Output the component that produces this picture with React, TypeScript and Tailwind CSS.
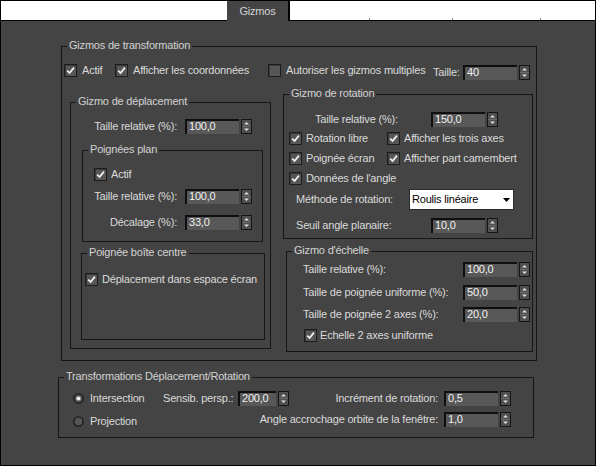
// Gizmos preferences tab (dark 3ds Max style panel)
import React from 'react';

const Check = ({ on = false }: { on?: boolean }) => (
  <span className="flex h-[13px] w-[13px] shrink-0 items-center justify-center border border-[#1c1c1c] bg-[#565656] shadow-[inset_1px_1px_0_#3a3a3a]">
    {on && (
      <svg width="9" height="9" viewBox="0 0 9 9">
        <path d="M1.2 4.6 3.6 7 7.9 1.6" fill="none" stroke="#f2f2f2" strokeWidth="1.7" />
      </svg>
    )}
  </span>
);

const Radio = ({ on = false }: { on?: boolean }) => (
  <svg width="11" height="11" viewBox="0 0 11 11" className="shrink-0">
    <circle cx="5.5" cy="5.5" r="4.6" fill="#555" stroke="#1a1a1a" strokeWidth="1.4" />
    {on && <circle cx="5.5" cy="5.5" r="2.1" fill="#f0f0f0" />}
  </svg>
);

const Spin = () => (
  <svg width="11" height="15" viewBox="0 0 11 15" className="ml-[2px] shrink-0">
    <rect x="0.5" y="0.5" width="10" height="14" fill="#4f4f4f" stroke="#151515" />
    <path d="M1 7.5h9" stroke="#6a6a6a" />
    <path d="M3 5.5h5L5.5 3z" fill="#e0e0e0" />
    <path d="M3 9.5h5L5.5 12z" fill="#e0e0e0" />
  </svg>
);

interface NumProps {
  value: string;
  className?: string;
  w?: string;
}

const Num = ({ value, className = '', w = 'w-[54px]' }: NumProps) => (
  <div className={`flex shrink-0 items-center ${className}`}>
    <div className={`h-[15px] ${w} border-l-2 border-t-2 border-[#0f0f0f] bg-[#585858] pl-[2px] leading-[11px] text-[#f2f2f2]`}>
      {value}
    </div>
    <Spin />
  </div>
);

interface GroupProps {
  title: string;
  className: string;
  children?: React.ReactNode;
}

const Group = ({ title, className, children }: GroupProps) => (
  <div className={`relative shrink-0 border border-[#161616] ${className}`}>
    <span className="absolute -top-[8px] left-[5px] bg-[#444444] px-[2px] leading-[13px] text-[#d2d2d2]">{title}</span>
    {children}
  </div>
);

export default function App() {
  return (
    <div className="h-[466px] w-[596px] overflow-hidden border border-black bg-[#444444] font-['Liberation_Sans',Arial,sans-serif] text-[11px] leading-[13px] tracking-[-0.2px] text-[#dadada]">
      {/* Tab strip */}
      <div className="flex h-[20px]">
        <div className="w-[226px] border-b border-black bg-white" />
        <div className="flex w-[63px] items-center justify-center border-r-2 border-black text-[#d4d4d4]">Gizmos</div>
        <div className="flex flex-1 items-end border-b border-black bg-white">
          <div className="w-[79px]" />
          <div className="h-[2px] w-[1px] bg-[#888]" />
          <div className="w-[82px]" />
          <div className="h-[2px] w-[1px] bg-[#888]" />
          <div className="w-[87px]" />
          <div className="h-[2px] w-[1px] bg-[#888]" />
        </div>
      </div>

      {/* Gizmos de transformation */}
      <Group title="Gizmos de transformation" className="ml-[60px] mt-[25px] h-[315px] w-[476px]">
        <div className="mt-[18px] flex h-[15px] items-center pl-[2px]">
          <label className="mb-[4px] flex w-[51px] items-center gap-[5px]">
            <Check on />
            Actif
          </label>
          <label className="mb-[4px] flex w-[153px] items-center gap-[5px]">
            <Check on />
            Afficher les coordonnées
          </label>
          <label className="mb-[4px] flex w-[165px] items-center gap-[5px] whitespace-nowrap">
            <Check />
            Autoriser les gizmos multiples
          </label>
          <span className="w-[30px]">Taille:</span>
          <Num value="40" />
        </div>

        <div className="flex items-start">
          {/* Gizmo de déplacement */}
          <Group title="Gizmo de déplacement" className="ml-[8px] mt-[22px] h-[247px] w-[201px]">
            <div className="mt-[16px] flex h-[15px] items-center">
              <span className="w-[106px] text-right">Taille relative (%):</span>
              <Num value="100,0" className="ml-[8px]" />
            </div>

            <Group title="Poignées plan" className="ml-[11px] mt-[16px] h-[92px] w-[181px]">
              <label className="ml-[11px] mt-[17px] flex h-[13px] items-center gap-[4px]">
                <Check on />
                Actif
              </label>
              <div className="mt-[8px] flex h-[15px] items-center">
                <span className="w-[94px] text-right">Taille relative (%):</span>
                <Num value="100,0" className="ml-[8px]" />
              </div>
              <div className="mt-[11px] flex h-[15px] items-center">
                <span className="w-[94px] text-right">Décalage (%):</span>
                <Num value="33,0" className="ml-[8px]" />
              </div>
            </Group>

            <Group title="Poignée boîte centre" className="ml-[10px] mt-[11px] h-[87px] w-[184px]">
              <label className="ml-[3px] mt-[19px] flex h-[13px] items-center gap-[4px] whitespace-nowrap">
                <Check on />
                Déplacement dans espace écran
              </label>
            </Group>
          </Group>

          <div className="ml-[12px] mt-[14px] flex w-[250px] flex-col items-end">
            {/* Gizmo de rotation */}
            <Group title="Gizmo de rotation" className="h-[145px] w-[250px]">
              <div className="mt-[17px] flex h-[15px] items-center">
                <span className="ml-[31px] w-[116px]">Taille relative (%):</span>
                <Num value="150,0" />
              </div>
              <div className="mt-[5px] flex h-[13px] items-center pl-[5px]">
                <label className="flex w-[98px] items-center gap-[4px]">
                  <Check on />
                  Rotation libre
                </label>
                <label className="flex items-center gap-[4px] whitespace-nowrap">
                  <Check on />
                  Afficher les trois axes
                </label>
              </div>
              <div className="mt-[7px] flex h-[13px] items-center pl-[5px]">
                <label className="flex w-[98px] items-center gap-[4px]">
                  <Check on />
                  Poignée écran
                </label>
                <label className="flex items-center gap-[4px] whitespace-nowrap">
                  <Check on />
                  Afficher part camembert
                </label>
              </div>
              <div className="mt-[7px] flex h-[13px] items-center pl-[5px]">
                <label className="flex items-center gap-[4px]">
                  <Check on />
                  Données de l'angle
                </label>
              </div>
              <div className="mt-[4px] flex h-[21px] items-center pl-[12px]">
                <span className="w-[113px]">Méthode de rotation:</span>
                <div className="flex h-[21px] w-[105px] items-center justify-between border border-[#2a2a2a] bg-white pl-[2px] pr-[3px] text-black">
                  <span>Roulis linéaire</span>
                  <svg width="7" height="4" viewBox="0 0 7 4">
                    <path d="M0 0h7L3.5 4z" fill="#000" />
                  </svg>
                </div>
              </div>
              <div className="mt-[8px] flex h-[15px] items-center pl-[12px]">
                <span className="w-[135px]">Seuil angle planaire:</span>
                <Num value="10,0" />
              </div>
            </Group>

            {/* Gizmo d'échelle */}
            <Group title="Gizmo d'échelle" className="mt-[12px] h-[101px] w-[247px]">
              <div className="mt-[10px] flex h-[15px] items-center pl-[16px]">
                <span className="w-[160px]">Taille relative (%):</span>
                <Num value="100,0" />
              </div>
              <div className="mt-[8px] flex h-[15px] items-center pl-[16px]">
                <span className="w-[160px] whitespace-nowrap">Taille de poignée uniforme (%):</span>
                <Num value="50,0" />
              </div>
              <div className="mt-[7px] flex h-[15px] items-center pl-[16px]">
                <span className="w-[160px] whitespace-nowrap">Taille de poignée 2 axes (%):</span>
                <Num value="20,0" />
              </div>
              <label className="mt-[7px] flex h-[13px] items-center gap-[3px] pl-[17px]">
                <Check on />
                Echelle 2 axes uniforme
              </label>
            </Group>
          </div>
        </div>
      </Group>

      {/* Transformations Déplacement/Rotation */}
      <Group title="Transformations Déplacement/Rotation" className="ml-[57px] mt-[16px] h-[61px] w-[476px]">
        <div className="mt-[13px] flex h-[15px] items-center pr-[22px]">
          <label className="ml-[14px] flex w-[90px] items-center gap-[6px]">
            <Radio on />
            Intersection
          </label>
          <span className="w-[75px] whitespace-nowrap">Sensib. persp.:</span>
          <Num value="200,0" w="w-[38px]" />
          <span className="ml-auto whitespace-nowrap">Incrément de rotation:</span>
          <Num value="0,5" className="ml-[6px]" />
        </div>
        <div className="mt-[6px] flex h-[15px] items-center pr-[22px]">
          <label className="ml-[14px] mt-[4px] flex w-[90px] items-center gap-[6px]">
            <Radio />
            Projection
          </label>
          <span className="ml-auto whitespace-nowrap">Angle accrochage orbite de la fenêtre:</span>
          <Num value="1,0" className="ml-[6px]" />
        </div>
      </Group>
    </div>
  );
}
